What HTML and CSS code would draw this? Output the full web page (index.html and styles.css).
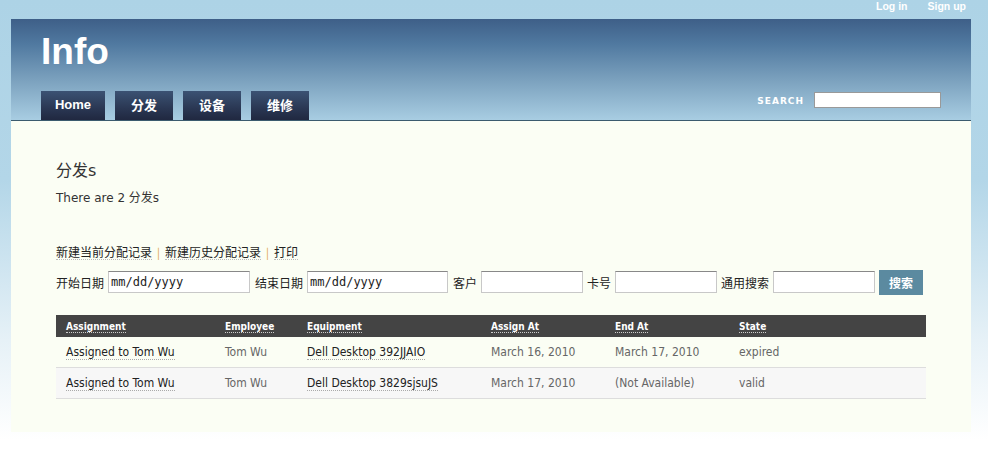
FILE: index.html
```html
<!DOCTYPE html>
<html>
<head>
<meta charset="utf-8">
<link rel="stylesheet" href="styles.css">
</head>
<body>
<div class="topbar">
  <a href="#">Log in</a>
  <a href="#">Sign up</a>
</div>
<div class="wrap">
  <div class="header">
    <div class="logo">Info</div>
    <div class="navrow">
      <ul class="nav">
        <li><a href="#" class="latin">Home</a></li>
        <li><a href="#">分发</a></li>
        <li><a href="#">设备</a></li>
        <li><a href="#">维修</a></li>
      </ul>
      <div class="search">
        <span class="search-label">SEARCH</span>
        <input type="text" class="search-input">
      </div>
    </div>
  </div>
  <div class="content">
    <h2 class="title">分发s</h2>
    <p class="count">There are 2 分发s</p>
    <div class="actions">
      <a href="#">新建当前分配记录</a><span class="sep">|</span><a href="#">新建历史分配记录</a><span class="sep">|</span><a href="#">打印</a>
    </div>
    <form class="filters">
      <label>开始日期</label><input type="text" class="date" value="mm/dd/yyyy">
      <label>结束日期</label><input type="text" class="date d2" value="mm/dd/yyyy">
      <label>客户</label><input type="text" class="txt">
      <label>卡号</label><input type="text" class="txt">
      <label>通用搜索</label><input type="text" class="txt">
      <button type="button" class="btn">搜索</button>
    </form>
    <table class="grid">
      <thead>
        <tr>
          <th class="c1"><span>Assignment</span></th>
          <th class="c2"><span>Employee</span></th>
          <th class="c3"><span>Equipment</span></th>
          <th class="c4"><span>Assign At</span></th>
          <th class="c5"><span>End At</span></th>
          <th class="c6"><span>State</span></th>
        </tr>
      </thead>
      <tbody>
        <tr>
          <td><a href="#">Assigned to Tom Wu</a></td>
          <td class="muted">Tom Wu</td>
          <td><a href="#">Dell Desktop 392JJAIO</a></td>
          <td class="muted">March 16, 2010</td>
          <td class="muted">March 17, 2010</td>
          <td class="muted">expired</td>
        </tr>
        <tr class="alt">
          <td><a href="#">Assigned to Tom Wu</a></td>
          <td class="muted">Tom Wu</td>
          <td><a href="#">Dell Desktop 3829sjsuJS</a></td>
          <td class="muted">March 17, 2010</td>
          <td class="muted">(Not Available)</td>
          <td class="muted">valid</td>
        </tr>
      </tbody>
    </table>
  </div>
</div>
</body>
</html>
```
FILE: styles.css
```css
html, body {
  margin: 0;
  padding: 0;
}
body {
  background: linear-gradient(to bottom, #add3e6 0px, #b3d6e8 180px, #e6f1f7 340px, #ffffff 440px);
  min-height: 460px;
  font-family: "DejaVu Sans", "Noto Sans CJK SC", sans-serif;
  color: #333;
}
.topbar {
  height: 19px;
  display: flex;
  justify-content: flex-end;
  gap: 20px;
  padding-right: 22px;
  box-sizing: border-box;
}
.topbar a {
  color: #fff;
  font-family: "Liberation Sans", Arial, sans-serif;
  font-size: 10.5px;
  font-weight: bold;
  text-decoration: none;
  line-height: 13px;
}
.wrap {
  width: 960px;
  margin-left: 11px;
}
.header {
  height: 102px;
  background: linear-gradient(to bottom, #3e5f88 0px, #5079a0 25px, #7aa0bd 60px, #a8cde2 101px);
  border-bottom: 1px solid #3b5b6e;
  box-sizing: border-box;
  padding-left: 30px;
  display: flex;
  flex-direction: column;
}
.logo {
  color: #fff;
  font-family: "Liberation Sans", Arial, sans-serif;
  font-weight: bold;
  font-size: 37px;
  letter-spacing: 0;
  line-height: 40px;
  margin-top: 13px;
  height: 40px;
}
.navrow {
  margin-top: auto;
  display: flex;
  align-items: flex-end;
  justify-content: space-between;
  padding-right: 30px;
}
.nav {
  list-style: none;
  margin: 0;
  padding: 0;
  display: flex;
  gap: 10px;
}
.nav a {
  display: block;
  height: 29px;
  width: 58px;
  background: linear-gradient(to bottom, #3b5273 0%, #2a3753 60%, #202840 100%);
  color: #fff;
  font-family: "Noto Sans CJK SC", sans-serif;
  font-weight: bold;
  font-size: 13px;
  line-height: 27px;
  text-decoration: none;
  box-sizing: border-box;
  text-align: center;
}
.nav a.latin {
  font-family: "Liberation Sans", Arial, sans-serif;
  width: 64px;
  font-size: 13px;
}
.search {
  display: flex;
  align-items: center;
  gap: 10px;
  margin-bottom: 12px;
}
.search-label {
  color: #fff;
  font-family: "DejaVu Sans", sans-serif;
  font-size: 9px;
  font-weight: bold;
  letter-spacing: 1px;
  margin-top: 1px;
}
.search-input {
  width: 127px;
  height: 16px;
  box-sizing: border-box;
  border: 1px solid #999;
  background: #fff;
  padding: 0;
  margin: 0;
}
.content {
  background: #fbfef4;
  height: 311px;
  padding: 38px 45px 0 45px;
  box-sizing: border-box;
}
.title {
  margin: 0;
  font-family: "DejaVu Sans", "Noto Sans CJK SC", sans-serif;
  font-weight: normal;
  font-size: 16px;
  line-height: 24px;
  color: #333;
}
.count {
  margin: 7px 0 0 0;
  font-size: 12px;
  line-height: 16px;
  color: #333;
}
.actions {
  margin-top: 37px;
  font-family: "Noto Sans CJK SC", sans-serif;
  font-size: 12px;
  line-height: 18px;
  display: flex;
  align-items: center;
}
.actions a {
  color: #222;
  text-decoration: none;
  border-bottom: 1px dotted #bbb;
  line-height: 15px;
}
.sep {
  color: #e0a040;
  margin: 0 5px;
  font-size: 11px;
}
.filters {
  margin: 8px 0 0 0;
  display: flex;
  align-items: center;
  height: 26px;
}
.filters label {
  flex: none;
  white-space: nowrap;
  font-family: "Noto Sans CJK SC", sans-serif;
  font-size: 12px;
  color: #222;
  margin-right: 4px;
}
.filters input {
  flex: none;
  height: 22px;
  box-sizing: border-box;
  border: 1px solid #c8c8c8;
  border-top-color: #888;
  background: #fff;
  margin: 0 4px 0 0;
  padding: 0 2px;
  font-family: "DejaVu Sans Mono", monospace;
  font-size: 12px;
  color: #222;
}
.filters input.date {
  width: 142px;
  margin-right: 5px;
}
.filters input.d2 {
  width: 141px;
}
.filters input.txt {
  width: 102px;
}
.btn {
  flex: none;
  width: 44px;
  height: 25px;
  border: none;
  background: #5b8aa0;
  color: #fff;
  font-family: "Noto Sans CJK SC", sans-serif;
  font-weight: bold;
  font-size: 12px;
  padding: 0;
  margin-left: 0;
}
.grid {
  margin-top: 20px;
  width: 870px;
  border-collapse: collapse;
  font-family: "DejaVu Sans Condensed", "DejaVu Sans", sans-serif;
}
.grid th {
  background: #444;
  color: #fff;
  font-size: 10px;
  font-weight: bold;
  text-align: left;
  height: 22px;
  padding: 0 0 0 10px;
}
.grid th span {
  border-bottom: 1px dotted #ccc;
}
.grid th.c1 { width: 149px; }
.grid th.c2 { width: 72px; }
.grid th.c3 { width: 174px; }
.grid th.c4 { width: 114px; }
.grid th.c5 { width: 114px; }
.grid td {
  height: 30px;
  padding: 0 0 0 10px;
  font-size: 12px;
  color: #222;
  border-bottom: 1px solid #ddd;
}
.grid td a {
  color: #222;
  text-decoration: none;
  border-bottom: 1px dotted #aaa;
}
.grid td.muted {
  color: #666;
}
.grid tr.alt td {
  background: #f7f7f7;
}
```
